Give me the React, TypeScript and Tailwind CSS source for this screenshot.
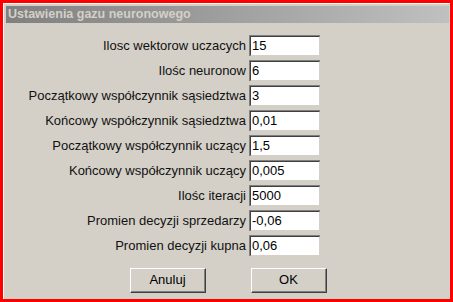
import React from "react";

const fields: { label: string; value: string }[] = [
  { label: "Ilosc wektorow uczacych", value: "15" },
  { label: "Ilośc neuronow", value: "6" },
  { label: "Początkowy współczynnik sąsiedztwa", value: "3" },
  { label: "Końcowy współczynnik sąsiedztwa", value: "0,01" },
  { label: "Początkowy współczynnik uczący", value: "1,5" },
  { label: "Końcowy współczynnik uczący", value: "0,005" },
  { label: "Ilośc iteracji", value: "5000" },
  { label: "Promien decyzji sprzedarzy", value: "-0,06" },
  { label: "Promien decyzji kupna", value: "0,06" },
];

const font = { fontFamily: '"Liberation Sans", Arial, sans-serif' };

const App: React.FC = () => {
  return (
    <div className="w-[453px] h-[302px] bg-[#ff0000] p-[3px]" style={font}>
      <div className="h-full bg-[#d4d0c8] border-l border-t border-white pt-[2px] pl-[2px] pr-[1px]">
        {/* title bar */}
        <div className="h-[17px] bg-gradient-to-r from-[#808080] to-[#c0c0c0] flex items-center pl-[2px]">
          <span className="text-[12.5px] font-bold text-[#d4d0c8] leading-none">
            Ustawienia gazu neuronowego
          </span>
        </div>

        <div className="grid grid-cols-[240px_71px] gap-x-[3px] gap-y-[4px] pt-[12px]">
          {fields.map((f) => (
            <React.Fragment key={f.label}>
              <div className="h-[21px] flex items-center justify-end text-[13px] text-[#111]">
                {f.label}
              </div>
              <div className="h-[21px] bg-white border-t border-l border-[#808080] border-r-[#ffffff] border-b-[#ffffff]">
                <div className="h-full border-t border-l border-[#404040] border-r border-b border-r-[#d4d0c8] border-b-[#d4d0c8] flex items-center pl-[1px] text-[13px] text-black">
                  {f.value}
                </div>
              </div>
            </React.Fragment>
          ))}
        </div>

        <div className="flex pl-[124px] gap-[45px] pt-[12px]">
          {["Anuluj", "OK"].map((b) => (
            <div
              key={b}
              className="w-[76px] h-[25px] bg-[#d4d0c8] border-t border-l border-white border-r border-b border-r-[#404040] border-b-[#404040]"
            >
              <div className="h-full border-r border-b border-[#808080] flex items-center justify-center text-[13px] text-black">
                {b}
              </div>
            </div>
          ))}
        </div>
      </div>
    </div>
  );
};

export default App;
